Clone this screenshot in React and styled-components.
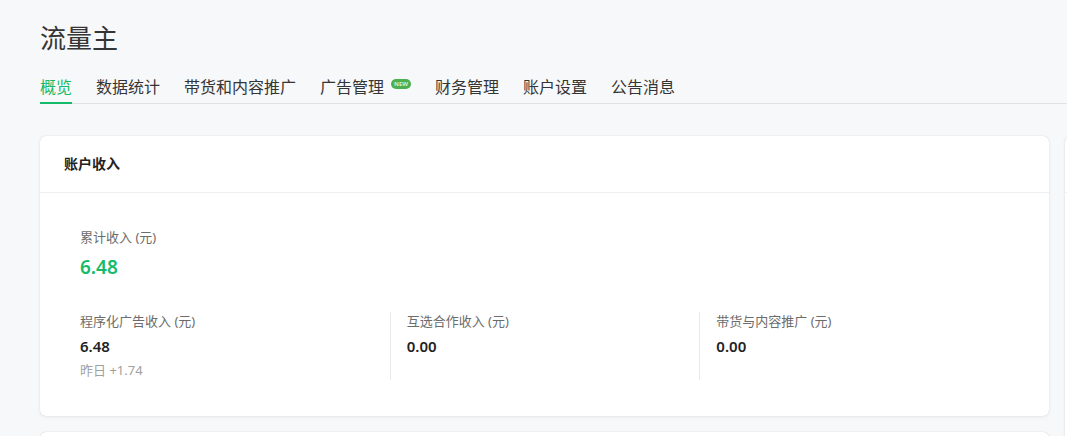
import React from "react";
import styled, { createGlobalStyle } from "styled-components";

const GlobalStyle = createGlobalStyle`
  *, *::before, *::after { box-sizing: border-box; }
  body {
    margin: 0;
    background: #f7f8fa;
    color: #353535;
    font-family: "Noto Sans", "Noto Sans CJK SC", sans-serif;
    font-size: 13px;
    line-height: 20px;
    overflow: hidden;
  }
  h1, h2, p, dl, dd { margin: 0; }
`;

const Page = styled.main`
  padding: 20px 0 0 40px;
`;

const Title = styled.h1`
  font-size: 26px;
  line-height: 36px;
  font-weight: 400;
`;

const Tabs = styled.nav`
  display: flex;
  gap: 24px;
  margin-top: 20px;
  border-bottom: 1px solid #e0e2e4;
`;

const Tab = styled.a`
  display: flex;
  margin-bottom: -1px;
  padding-bottom: 4px;
  border-bottom: 2px solid ${(p) => (p.$active ? "#14bb68" : "transparent")};
  color: ${(p) => (p.$active ? "#14bb68" : "#353535")};
  font-size: 16px;
  line-height: 22px;
  text-decoration: none;
  white-space: nowrap;
`;

const NewBadge = styled.span`
  width: 20px;
  height: 10px;
  margin: 3px 0 0 7px;
  border-radius: 5px;
  background: #4cb050;
  color: #d3edd4;
  font-size: 6px;
  line-height: 10px;
  font-weight: 700;
  text-align: center;
`;

const Board = styled.div`
  display: grid;
  grid-template-columns: minmax(0, 1fr) 320px;
  gap: 16px;
  margin: 32px -318px 0 0;
`;

const Column = styled.div`
  display: flex;
  flex-direction: column;
  gap: 16px;
`;

const Card = styled.section`
  min-height: 80px;
  border-radius: 6px;
  background: #fff;
  box-shadow: 0 0 1px rgba(0, 0, 0, 0.2), 0 1px 4px rgba(0, 0, 0, 0.06);
`;

const CardHeader = styled.header`
  height: 57px;
  padding: 18px 24px;
  border-bottom: 1px solid #eeeff0;
`;

const CardTitle = styled.h2`
  color: #222;
  font-size: 14px;
  line-height: 20px;
  font-weight: 700;
`;

const CardBody = styled.div`
  padding: 35px 40px 36px;
`;

const Stat = styled.dl`
  display: flex;
  flex-direction: column;
  gap: 2px;
`;

const Label = styled.dt`
  padding-bottom: 2px;
  color: #6c6c6c;
  line-height: 18px;
`;

const Value = styled.dd`
  color: #222;
  font-size: 15px;
  line-height: 24px;
  font-weight: 600;
`;

const TotalValue = styled(Value)`
  padding: 5px 0;
  color: #14bb68;
  font-size: 19px;
`;

const Note = styled.dd`
  color: #a0a0a0;
`;

const Breakdown = styled.div`
  display: grid;
  grid-template-columns: repeat(3, 1fr);
  margin-top: 28px;

  & > * + * {
    padding-left: 16px;
    border-left: 1px solid #e8e9ea;
  }
`;

const tabs = [
  { name: "概览", active: true },
  { name: "数据统计" },
  { name: "带货和内容推广" },
  { name: "广告管理", isNew: true },
  { name: "财务管理" },
  { name: "账户设置" },
  { name: "公告消息" },
];

const incomes = [
  { label: "程序化广告收入 (元)", value: "6.48", note: "昨日 +1.74" },
  { label: "互选合作收入 (元)", value: "0.00" },
  { label: "带货与内容推广 (元)", value: "0.00" },
];

export default function App() {
  return (
    <Page lang="zh-CN">
      <GlobalStyle />
      <Title>流量主</Title>
      <Tabs>
        {tabs.map((tab) => (
          <Tab
            key={tab.name}
            href="#"
            $active={tab.active}
            aria-current={tab.active ? "page" : undefined}
          >
            {tab.name}
            {tab.isNew && <NewBadge>NEW</NewBadge>}
          </Tab>
        ))}
      </Tabs>
      <Board>
        <Column>
          <Card>
            <CardHeader>
              <CardTitle>账户收入</CardTitle>
            </CardHeader>
            <CardBody>
              <Stat>
                <Label>累计收入 (元)</Label>
                <TotalValue>6.48</TotalValue>
              </Stat>
              <Breakdown>
                {incomes.map((item) => (
                  <Stat key={item.label}>
                    <Label>{item.label}</Label>
                    <Value>{item.value}</Value>
                    {item.note && <Note>{item.note}</Note>}
                  </Stat>
                ))}
              </Breakdown>
            </CardBody>
          </Card>
          <Card />
        </Column>
        <Card>
          <CardHeader />
        </Card>
      </Board>
    </Page>
  );
}
